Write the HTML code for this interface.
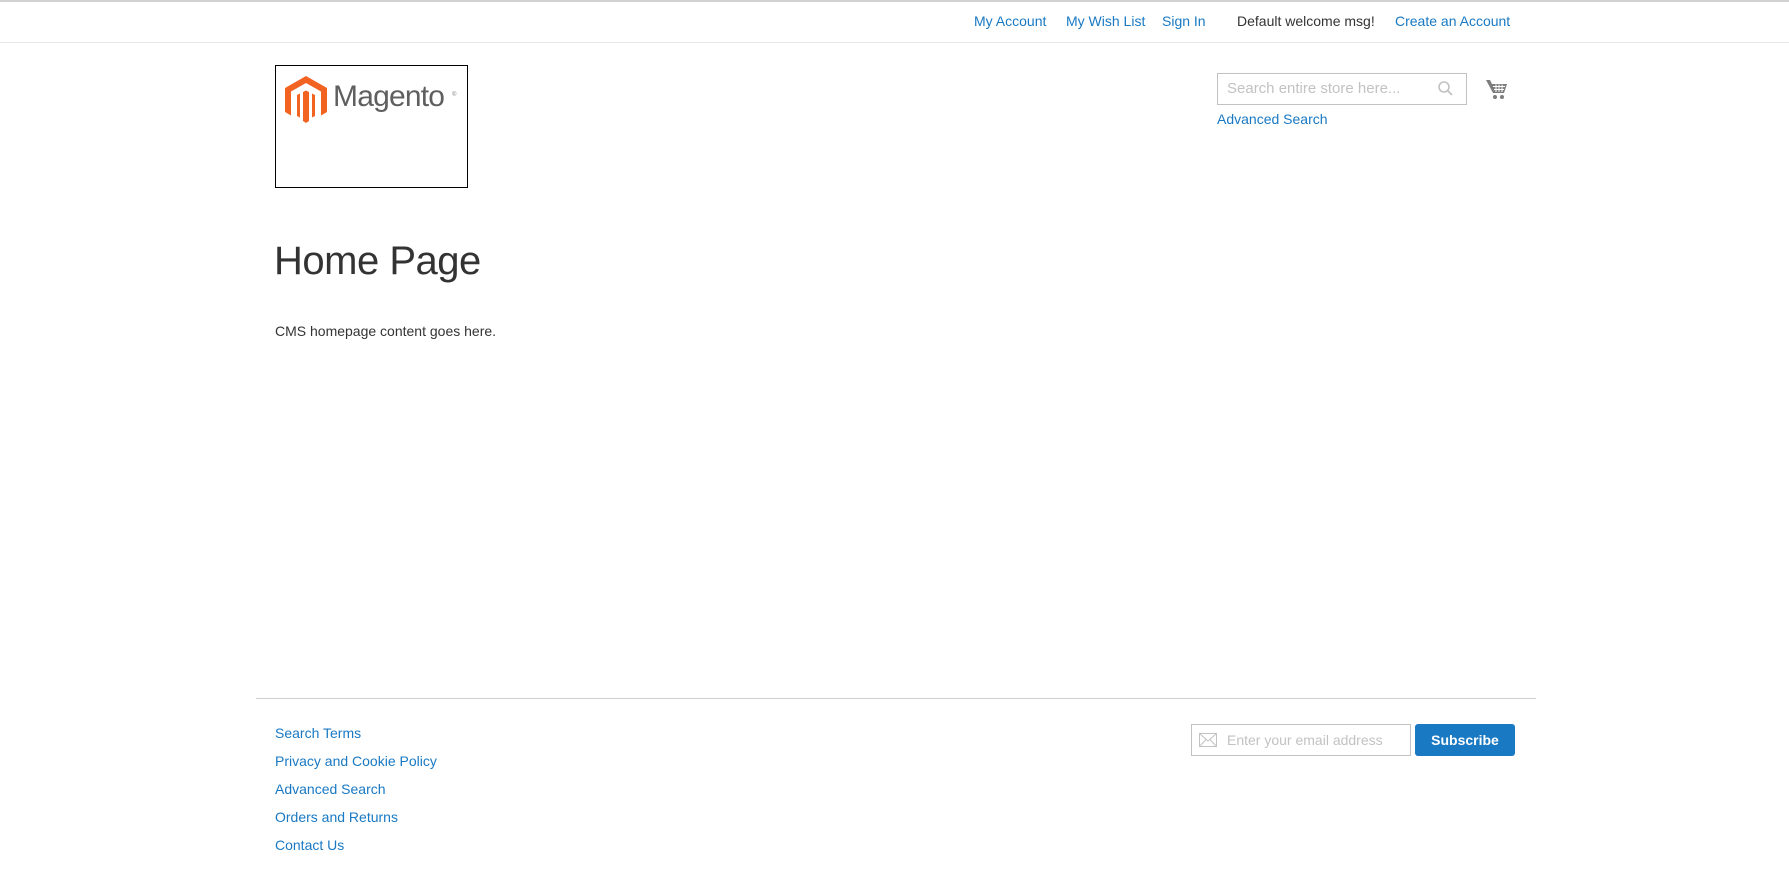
<!DOCTYPE html>
<html><head><meta charset="utf-8"><style>
*{margin:0;padding:0;box-sizing:border-box}
body{width:1789px;height:885px;background:#fff;font-family:"Liberation Sans",sans-serif;font-size:14px;color:#333;position:relative;overflow:hidden}
a{color:#1979c3;text-decoration:none}
.abs{position:absolute;white-space:nowrap}
</style></head><body>
<div class="abs" style="left:0;top:0;width:1789px;height:2px;background:#d1d1d1"></div>
<div class="abs" style="left:0;top:42px;width:1789px;height:1px;background:#e8e8e8"></div>
<a class="abs" style="left:974px;top:13px">My Account</a>
<a class="abs" style="left:1066px;top:13px">My Wish List</a>
<a class="abs" style="left:1162px;top:13px">Sign In</a>
<span class="abs" style="left:1237px;top:13px;color:#333">Default welcome msg!</span>
<a class="abs" style="left:1395px;top:13px">Create an Account</a>

<div class="abs" style="left:275px;top:65px;width:193px;height:123px;border:1px solid #000"></div>
<svg class="abs" style="left:285px;top:76px" width="42" height="47" viewBox="0 0 42 47">
<path d="M21 0 L42 12 V36 L36 39.5 V15.5 L21 7 L6 15.5 V39.5 L0 36 V12 Z" fill="#f26322"/>
<path d="M18 16 L21 14.5 L24 16 V45 L21 47 L18 45 Z" fill="#f26322"/>
<path d="M12 19 L15 17.5 V41.5 L12 40 Z M27 17.5 L30 19 V40 L27 41.5 Z" fill="#f26322"/>
</svg>
<span class="abs" style="left:333px;top:80px;font-size:30px;color:#5f5f5f;letter-spacing:-0.8px">Magento</span>
<span class="abs" style="left:452px;top:92px;font-size:6px;color:#888">®</span>

<div class="abs" style="left:1217px;top:73px;width:250px;height:32px;border:1px solid #c2c2c2"></div>
<span class="abs" style="left:1227px;top:80px;font-size:15px;color:#c2c2c2">Search entire store here...</span>
<svg class="abs" style="left:1437px;top:80px" width="18" height="18" viewBox="0 0 18 18"><circle cx="7" cy="7" r="5" fill="none" stroke="#c2c2c2" stroke-width="1.6"/><path d="M10.5 10.5 L15 15" stroke="#c2c2c2" stroke-width="1.8"/></svg>
<svg class="abs" style="left:1485px;top:78px" width="24" height="24" viewBox="0 0 24 24"><path d="M1 2 H5 L7 6 H22 L19 15 H8 Z" fill="#7d7d7d"/><path d="M8 8.5 H20 M9 11.5 H19 M11 6.5 V14 M14 6.5 V14 M17 6.5 V14" stroke="#fff" stroke-width="1"/><circle cx="10" cy="19" r="2" fill="#7d7d7d"/><circle cx="17" cy="19" r="2" fill="#7d7d7d"/></svg>
<a class="abs" style="left:1217px;top:111px">Advanced Search</a>

<div class="abs" style="left:274px;top:239px;font-size:40px;font-weight:300;color:#333;letter-spacing:-0.5px">Home Page</div>
<div class="abs" style="left:275px;top:323px">CMS homepage content goes here.</div>

<div class="abs" style="left:256px;top:698px;width:1280px;height:1px;background:#cfcfcf"></div>
<a class="abs" style="left:275px;top:725px">Search Terms</a>
<a class="abs" style="left:275px;top:753px">Privacy and Cookie Policy</a>
<a class="abs" style="left:275px;top:781px">Advanced Search</a>
<a class="abs" style="left:275px;top:809px">Orders and Returns</a>
<a class="abs" style="left:275px;top:837px">Contact Us</a>

<div class="abs" style="left:1191px;top:724px;width:220px;height:32px;border:1px solid #c2c2c2"></div>
<svg class="abs" style="left:1199px;top:733px" width="18" height="14" viewBox="0 0 18 14"><rect x="0.5" y="0.5" width="17" height="13" fill="none" stroke="#c2c2c2"/><path d="M0.5 0.5 L9 8 L17.5 0.5 M0.5 13.5 L7 6.5 M17.5 13.5 L11 6.5" fill="none" stroke="#c2c2c2"/></svg>
<span class="abs" style="left:1227px;top:732px;font-size:14px;color:#c2c2c2">Enter your email address</span>
<div class="abs" style="left:1415px;top:724px;width:100px;height:32px;background:#1979c3;border-radius:3px;color:#fff;font-weight:bold;text-align:center;line-height:32px">Subscribe</div>
</body></html>
